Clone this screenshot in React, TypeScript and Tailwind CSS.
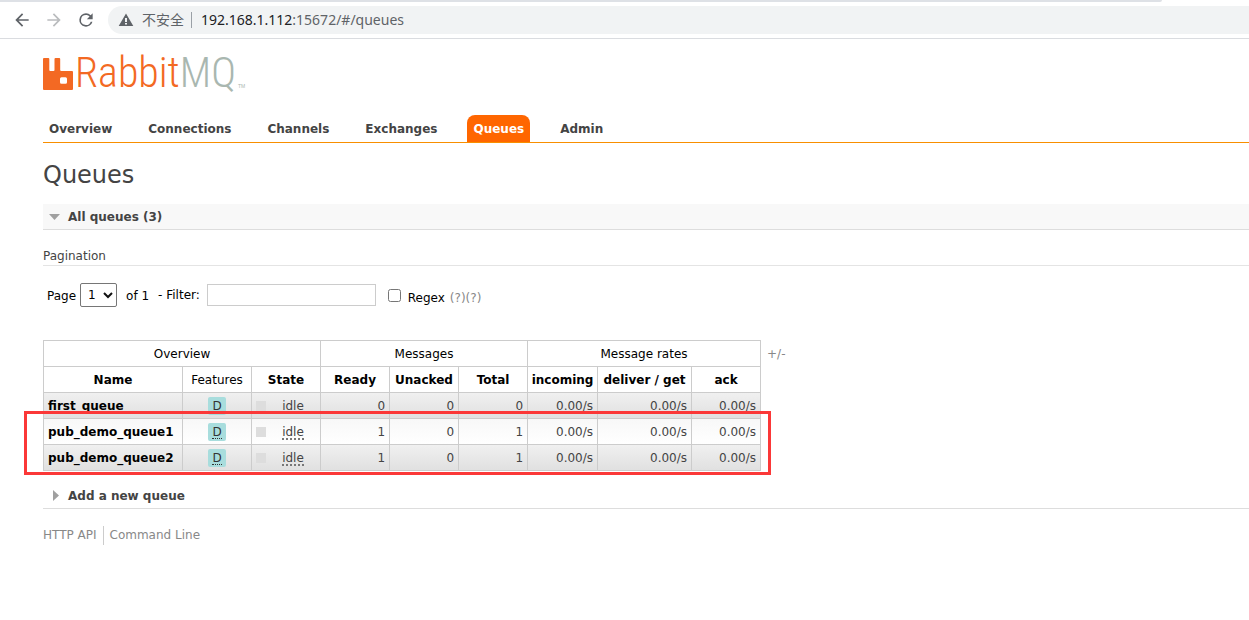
import React from "react";

const tabs = ["Overview", "Connections", "Channels", "Exchanges", "Queues", "Admin"];

type Queue = { name: string; ready: number; unacked: number; total: number; policy: boolean };

const queues: Queue[] = [
  { name: "first_queue", ready: 0, unacked: 0, total: 0, policy: false },
  { name: "pub_demo_queue1", ready: 1, unacked: 0, total: 1, policy: true },
  { name: "pub_demo_queue2", ready: 1, unacked: 0, total: 1, policy: true },
];

function BrowserBar() {
  return (
    <div className="border-b border-[#dadce0] bg-white">
      <div className="h-[2px] w-[93%] rounded-br bg-[#dee1e6]" />
      <div className="flex h-9 items-center pl-3">
        <button aria-label="Back" className="mr-3 text-[#5f6368]">
          <svg width="20" height="20" viewBox="0 0 24 24" fill="currentColor">
            <path d="M20 11H7.83l5.59-5.59L12 4l-8 8 8 8 1.41-1.41L7.83 13H20v-2z" />
          </svg>
        </button>
        <button aria-label="Forward" className="mr-3 text-[#babcbe]">
          <svg width="20" height="20" viewBox="0 0 24 24" fill="currentColor">
            <path d="M12 4l-1.410 1.410L16.170 11H4v2h12.170l-5.580 5.590L12 20l8-8z" />
          </svg>
        </button>
        <button aria-label="Reload" className="mr-3 text-[#5f6368]">
          <svg width="20" height="20" viewBox="0 0 24 24" fill="currentColor">
            <path d="M17.65 6.35A7.96 7.96 0 0 0 12 4a8 8 0 1 0 7.73 10h-2.08A6 6 0 1 1 12 6c1.66 0 3.14.69 4.22 1.78L13 11h7V4l-2.35 2.35z" />
          </svg>
        </button>
        <div className="flex h-7 flex-1 items-center rounded-l-full bg-[#f1f3f4] pl-2.5 font-['Noto_Sans','Noto_Sans_CJK_SC',sans-serif] text-sm">
          <svg className="mr-2" width="16" height="16" viewBox="0 0 16 16" fill="#5f6368">
            <path fillRule="evenodd" d="M8 1.500 15.300 14H.7L8 1.500zM7 6v4h2V6H7zm0 5v1.500h2V11H7z" />
          </svg>
          <span className="text-[#5f6368]">不安全</span>
          <span className="ml-[7px] mr-[9px] h-4 w-px bg-[#9aa0a6]" />
          <span className="text-[#5f6368]">
            <span className="text-[#202124]">192.168.1.112</span>:15672/#/queues
          </span>
        </div>
      </div>
    </div>
  );
}

function Logo() {
  return (
    <a href="#/" className="flex h-9 items-end text-[#f36923]" aria-label="RabbitMQ">
      <svg className="mb-px" width="30" height="32" viewBox="0 0 30 32" fill="currentColor">
        <path
          fillRule="evenodd"
          d="M1 0h4.300q1 0 1 1v11q0 1 1 1h3.200q1 0 1-1V1q0-1 1-1h3.700q1 0 1 1v11q0 1 1 1h10.800q1 0 1 1v17q0 1-1 1H1q-1 0-1-1V1q0-1 1-1zM18.500 19.300q-1.500 0-1.500 1.500v3.400q0 1.500 1.500 1.500h4q1.500 0 1.500-1.500v-3.400q0-1.500-1.500-1.500z"
        />
      </svg>
      <span className="ml-0.5 pb-0.5 font-['Roboto_Condensed_Light','Roboto_Condensed','Open_Sans',sans-serif] text-[42px] font-light leading-8">
        Rabbit<span className="text-[#a9b7b0]">MQ</span>
      </span>
      <span className="ml-0.5 mb-0.5 font-['Liberation_Sans',sans-serif] text-[5px] leading-[5px] text-[#a9b7b0]">TM</span>
    </a>
  );
}

function QueueTable() {
  const head = "border border-[#ccc] text-black";
  const num = "border border-[#ccc] px-1 text-right";
  return (
    <table className="w-[718px] table-fixed border-collapse leading-[18px]">
      <colgroup>
        <col className="w-[139px]" />
        <col className="w-[69px]" />
        <col className="w-[69px]" />
        <col className="w-[69px]" />
        <col className="w-[69px]" />
        <col className="w-[69px]" />
        <col className="w-[70px]" />
        <col className="w-[94px]" />
        <col className="w-[69px]" />
      </colgroup>
      <thead>
        <tr className="h-[26px]">
          <th colSpan={3} className={head + " font-normal"}>Overview</th>
          <th colSpan={3} className={head + " font-normal"}>Messages</th>
          <th colSpan={3} className={head + " font-normal"}>Message rates</th>
        </tr>
        <tr className="h-[26px]">
          {["Name", "Features", "State", "Ready", "Unacked", "Total", "incoming", "deliver / get", "ack"].map((h) => (
            <th key={h} className={head + (h === "Features" ? " font-normal" : " font-bold")}>
              {h === "Features" ? h : <button className="whitespace-nowrap font-bold">{h}</button>}
            </th>
          ))}
        </tr>
      </thead>
      <tbody>
        {queues.map((q) => (
          <tr
            key={q.name}
            className="h-[26px] bg-linear-to-b odd:from-[#f0f0f0] odd:to-[#e0e0e0] even:from-[#f8f8f8] even:to-white"
          >
            <td className="border border-[#ccc] px-1">
              <a href={"#/queues/" + q.name} className="font-bold text-black">{q.name}</a>
            </td>
            <td className="border border-[#ccc] text-center">
              <span className="inline-block rounded-xs bg-[#a8dddd] px-1 text-[#333]">
                <abbr title="durable: true" className="inline-block border-b border-dotted border-[#333] leading-3 no-underline">D</abbr>
              </span>
            </td>
            <td className="border border-[#ccc] px-1">
              <div className="flex items-center">
                <span className="size-2.5 bg-[#ddd]" />
                <span className="flex-1 pl-1 text-center">
                  <abbr
                    title={q.policy ? "idle since last update" : "idle"}
                    className={
                      q.policy
                        ? "inline-block border-b-2 border-dotted border-[#777] leading-3 no-underline"
                        : "inline-block leading-3 no-underline"
                    }
                  >
                    idle
                  </abbr>
                </span>
              </div>
            </td>
            <td className={num}>{q.ready}</td>
            <td className={num}>{q.unacked}</td>
            <td className={num}>{q.total}</td>
            <td className={num}>0.00/s</td>
            <td className={num}>0.00/s</td>
            <td className={num}>0.00/s</td>
          </tr>
        ))}
      </tbody>
    </table>
  );
}

export default function App() {
  return (
    <div className="bg-white font-['DejaVu_Sans',Verdana,sans-serif] text-xs text-[#444]">
      <BrowserBar />
      <div className="pl-[43px] pt-4">
        <Logo />
        <nav className="mt-6 flex gap-6 border-b border-[#f88f00]">
          {tabs.map((t) => (
            <a
              key={t}
              href={"#/" + t.toLowerCase()}
              className={
                t === "Queues"
                  ? "rounded-t-lg bg-[#ff6600] px-1.5 pt-px font-bold leading-[26px] text-white"
                  : "px-1.5 pt-px font-bold leading-[26px]"
              }
            >
              {t}
            </a>
          ))}
        </nav>
        <h1 className="mt-4 text-2xl leading-8">Queues</h1>
        <h2 className="mt-[13px] border-b border-[#ddd] bg-[#f8f8f8]">
          <button className="flex h-[25px] items-center gap-2 pl-1.5 font-bold">
            <svg width="11" height="6" viewBox="0 0 11 6" fill="#a0a0a0">
              <path d="M0 0h11L5.500 6z" />
            </svg>
            All queues (3)
          </button>
        </h2>
        <h3 className="mt-[17px] border-b border-[#e4e4e4] leading-[18px]">Pagination</h3>
        <div className="mt-[17px] flex h-6 items-center pl-1 text-black">
          <label htmlFor="page" className="pt-0.5">Page</label>
          <span className="relative ml-1 flex items-center">
            <select id="page" className="h-6 w-[37px] appearance-none rounded-xs border border-[#767676] bg-white pl-[7px]">
              <option>1</option>
            </select>
            <svg className="pointer-events-none absolute right-1" width="10" height="7" viewBox="0 0 10 7" fill="none" stroke="#111" strokeWidth="2">
              <path d="M1 1l4 4 4-4" />
            </svg>
          </span>
          <span className="ml-[9px] pt-0.5">of 1</span>
          <label htmlFor="filter" className="ml-[9px]">- Filter:</label>
          <input id="filter" type="text" className="ml-[7px] h-[22px] w-[169px] border border-[#ccc] px-1" />
          <input id="regex" type="checkbox" className="ml-3 size-[13px]" />
          <label htmlFor="regex" className="ml-[7px] pt-1.5">Regex</label>
          <span className="ml-[5px] pt-1.5 text-[#888]">
            <button>(?)</button>
            <button>(?)</button>
          </span>
        </div>
        <div className="mt-[33px] flex items-start">
          <div className="relative">
            <QueueTable />
            <div className="pointer-events-none absolute -bottom-1 -left-[19px] -right-[10px] h-16 border-3 border-[#fb3838]" />
          </div>
          <button className="ml-1.5 mt-1 leading-5 text-[#888]">+/-</button>
        </div>
        <h2 className="mt-3 border-b border-[#ddd]">
          <button className="flex h-[25px] items-center gap-2 pl-[9px] font-bold">
            <svg width="8" height="11" viewBox="0 0 8 11" fill="#a0a0a0">
              <path d="M1 0v11l6-5.500z" />
            </svg>
            Add a new queue
          </button>
        </h2>
        <footer className="mt-[17px] flex leading-[19px] text-[#888]">
          <a href="#/api" className="border-r border-[#ccc] pr-1.5">HTTP API</a>
          <a href="#/cli" className="pl-1.5">Command Line</a>
        </footer>
      </div>
    </div>
  );
}
